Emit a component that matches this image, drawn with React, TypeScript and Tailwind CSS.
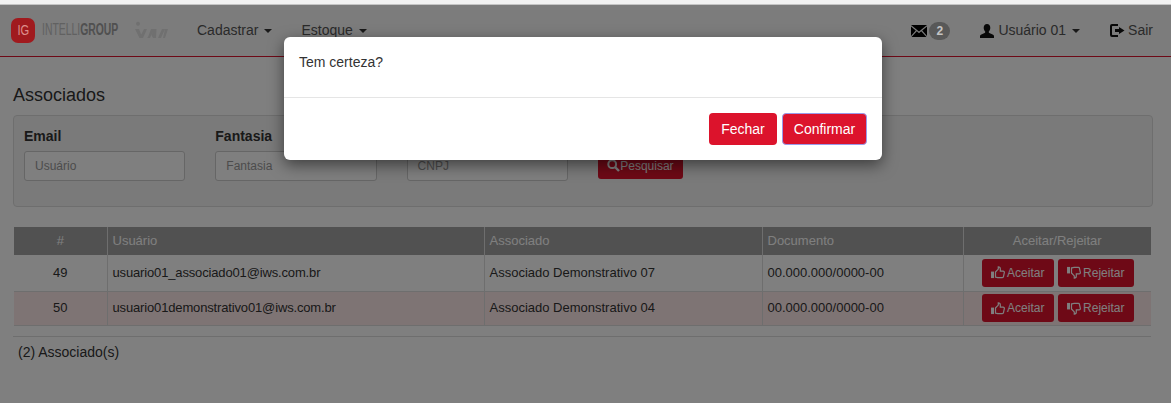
const Caret = () => (
  <span className="ml-[6px] inline-block h-0 w-0 border-x-[4px] border-t-[4px] border-x-transparent border-t-[#333] align-middle" />
);

const Envelope = () => (
  <svg width="16" height="12" viewBox="0 0 16 12" className="shrink-0">
    <path fill="#000" d="M0 0h16L8 6.500zM0 1.500v9.500l4.800-5.500zM16 1.500v9.500l-4.800-5.500zM5.800 6.300 8 8.200l2.200-1.900L15.500 12H.5z" />
  </svg>
);

const UserIcon = () => (
  <svg width="14" height="14" viewBox="0 0 14 14" className="shrink-0">
    <path fill="#111" d="M7 0c2 0 3.300 1.500 3.300 3.700 0 1.700-.8 3.200-1.600 4 .1 1 .7 1.400 2.300 2 1.600.6 2.900 1.200 3 2.300V14H0v-2c.1-1.100 1.400-1.700 3-2.300 1.600-.6 2.200-1 2.300-2-.8-.8-1.600-2.300-1.600-4C3.700 1.500 5 0 7 0z" />
  </svg>
);

const LogOut = () => (
  <svg width="15" height="13" viewBox="0 0 15 13" className="shrink-0">
    <path fill="#111" d="M2 0h6v2H2.500a.5.500 0 0 0-.5.500v8c0 .3.200.5.500.5H8v2H2a2 2 0 0 1-2-2V2a2 2 0 0 1 2-2zM9 3l5.500 3.500L9 10V8H5V5h4z" />
  </svg>
);

const Search = () => (
  <svg width="13" height="13" viewBox="0 0 13 13" className="shrink-0">
    <circle cx="5.200" cy="5.200" r="3.900" fill="none" stroke="#fff" strokeWidth="2" />
    <path d="M8 8l4 4" stroke="#fff" strokeWidth="2.400" />
  </svg>
);

const Thumb = ({ down }: { down?: boolean }) => (
  <svg width="14" height="13" viewBox="0 0 15 14" className="shrink-0">
    <g transform={down ? "translate(0 14) scale(1 -1)" : undefined}>
      <rect x="0" y="6" width="3.200" height="7" fill="#fff" />
      <path
        fill="none"
        stroke="#fff"
        strokeWidth="1.300"
        d="M4.800 6.500 7.800 3.300V1c1.500 0 2.200 1 2.200 2.200V5.600h3c1 0 1.500.7 1.300 1.600l-.9 4.300c-.1.700-.6 1-1.200 1H7.700c-1.100 0-1.700-.6-2.900-.6z"
      />
    </g>
  </svg>
);

const Field = ({ label, ph }: { label: string; ph: string }) => (
  <div className="w-[161.300px] shrink-0">
    <div className="mb-[5px] h-5 text-[14px] font-bold leading-5 text-[#333]">{label}</div>
    <div className="flex h-[30px] items-center rounded-[3px] border border-[#ccc] bg-white px-[10px] text-[12px] text-[#999]">{ph}</div>
  </div>
);

const rows = [
  { id: 49, user: "usuario01_associado01@iws.com.br", assoc: "Associado Demonstrativo 07", bg: "bg-white", h: "h-[36px]" },
  { id: 50, user: "usuario01demonstrativo01@iws.com.br", assoc: "Associado Demonstrativo 04", bg: "bg-[#fde8e8]", h: "h-[34px]" },
];

export default function App() {
  return (
    <div className="relative h-[403px] w-[1171px] overflow-hidden bg-white font-['Liberation_Sans',Arial,sans-serif] text-[#333]">
      <div className="h-[4px] bg-[#f1f1f1]" />
      <div className="h-px bg-[#c4c4c4]" />
      <div className="h-[398px]">
        <nav className="flex h-[52px] items-center border-b border-[#dc132c] bg-[#f8f8f8] pl-[11px] pr-[18px] text-[14px] text-[#555]">
          <div className="relative z-10 flex h-[25px] w-[24px] items-center justify-center rounded-[7px] bg-[#a01a1e] text-[14px] text-[#dd8f8c]">
            <span className="inline-block scale-x-[0.8]">IG</span>
          </div>
          <div className="ml-[7px] w-[76px] whitespace-nowrap">
            <span className="inline-block origin-left scale-x-[0.65] text-[16px] leading-none text-[#c2c2c2]">
              INTELLI<b className="text-[#a0a0a0]">GROUP</b>
            </span>
          </div>
          <svg width="34" height="20" viewBox="0 0 34 20" className="ml-[17px] shrink-0">
            <circle cx="3" cy="2.800" r="2" fill="#e0e0e0" />
            <path fill="#e0e0e0" d="M0 8h4l3.500 9h-3zM6 14l3-6h3l-4 9H6.500zM12 17l1-1 3-8h3l-4 9zM16.500 14l2.500-6h2.500l-.5 9h-3zM23 17l4-9h3l-4 9zM28 17l2-9h3l-3 9z" />
          </svg>
          <span className="ml-[28px]">Cadastrar<Caret /></span>
          <span className="ml-[29px]">Estoque<Caret /></span>
          <div className="ml-auto flex items-center">
            <Envelope />
            <span className="relative z-10 ml-[2px] flex h-[18px] w-[21px] items-center justify-center rounded-full bg-[#585858] text-[12px] font-bold leading-none text-[#c4c4c4]">2</span>
            <span className="ml-[30px] flex items-center gap-[4px]">
              <UserIcon />
              <span>Usuário 01<Caret /></span>
            </span>
            <span className="ml-[30px] flex items-center gap-[3px]"><LogOut />Sair</span>
          </div>
        </nav>

        <main className="h-[346px] bg-white px-[13px]">
          <h1 className="pt-[27px] text-[18px] leading-[22px] text-[#333]">Associados</h1>
          <section className="mt-[9px] flex h-[92px] w-[1140px] gap-[30px] rounded-[4px] border border-[#ddd] bg-[#f5f5f5] pl-[10px] pt-[10px]">
            <Field label="Email" ph="Usuário" />
            <Field label="Fantasia" ph="Fantasia" />
            <Field label="CNPJ" ph="CNPJ" />
            <div className="pt-[26px]">
              <span className="flex h-[27px] w-[85px] items-center justify-center rounded-[3px] bg-[#dc132c] text-[12px] text-white">
                <Search />Pesquisar
              </span>
            </div>
          </section>

          <table className="ml-px mt-[20px] w-[1137px] table-fixed border-collapse text-[13px]">
            <colgroup>
              <col className="w-[93px]" />
              <col className="w-[377px]" />
              <col className="w-[278px]" />
              <col className="w-[201px]" />
              <col />
            </colgroup>
            <thead>
              <tr className="h-[28px] bg-[#a3a3a3] text-white">
                <th className="border-r border-[#ddd] text-center font-normal">#</th>
                <th className="border-r border-[#ddd] pl-[5px] text-left font-normal">Usuário</th>
                <th className="border-r border-[#ddd] pl-[5px] text-left font-normal">Associado</th>
                <th className="border-r border-[#ddd] pl-[5px] text-left font-normal">Documento</th>
                <th className="text-center font-normal">Aceitar/Rejeitar</th>
              </tr>
            </thead>
            <tbody>
              {rows.map((r) => (
                <tr key={r.id} className={`${r.h} ${r.bg} border-b border-[#ddd]`}>
                  <td className="border-r border-[#ddd] text-center">{r.id}</td>
                  <td className="border-r border-[#ddd] pl-[5px] tracking-[-0.15px]">{r.user}</td>
                  <td className="border-r border-[#ddd] pl-[5px]">{r.assoc}</td>
                  <td className="border-r border-[#ddd] pl-[5px]">00.000.000/0000-00</td>
                  <td>
                    <div className="flex justify-center gap-[4px] pl-px text-[12px] text-white">
                      <span className="flex h-[28px] w-[72px] items-center justify-center gap-[2px] rounded-[3px] bg-[#dc132c]"><Thumb />Aceitar</span>
                      <span className="flex h-[28px] w-[76px] items-center justify-center gap-[2px] rounded-[3px] bg-[#dc132c]"><Thumb down />Rejeitar</span>
                    </div>
                  </td>
                </tr>
              ))}
            </tbody>
          </table>

          <div className="mt-[10px] h-px w-[1138px] bg-[#ddd]" />
          <p className="ml-[5px] mt-[5px] text-[14px] leading-5 text-[#333]">(2) Associado(s)</p>
        </main>
      </div>

      {/* Backdrop and dialog lie over the page */}
      <div className="absolute inset-x-0 bottom-0 top-[5px] bg-black/50" />
      <div className="absolute left-[284px] top-[37px] h-[123px] w-[598px] rounded-[6px] bg-white shadow-[0_5px_15px_rgba(0,0,0,0.5)]">
        <div className="h-[61px] border-b border-[#e5e5e5] px-[15px] pt-[15px] text-[14px] leading-5 text-[#333]">Tem certeza?</div>
        <div className="flex justify-end gap-[5px] pr-[15px] pt-[15px] text-[14px] text-white">
          <span className="flex h-[32px] w-[68px] items-center justify-center rounded-[4px] bg-[#dc132c]">Fechar</span>
          <span className="flex h-[32px] w-[85px] items-center justify-center rounded-[4px] border border-[#9a9aea] bg-[#dc132c]">Confirmar</span>
        </div>
      </div>
    </div>
  );
}
